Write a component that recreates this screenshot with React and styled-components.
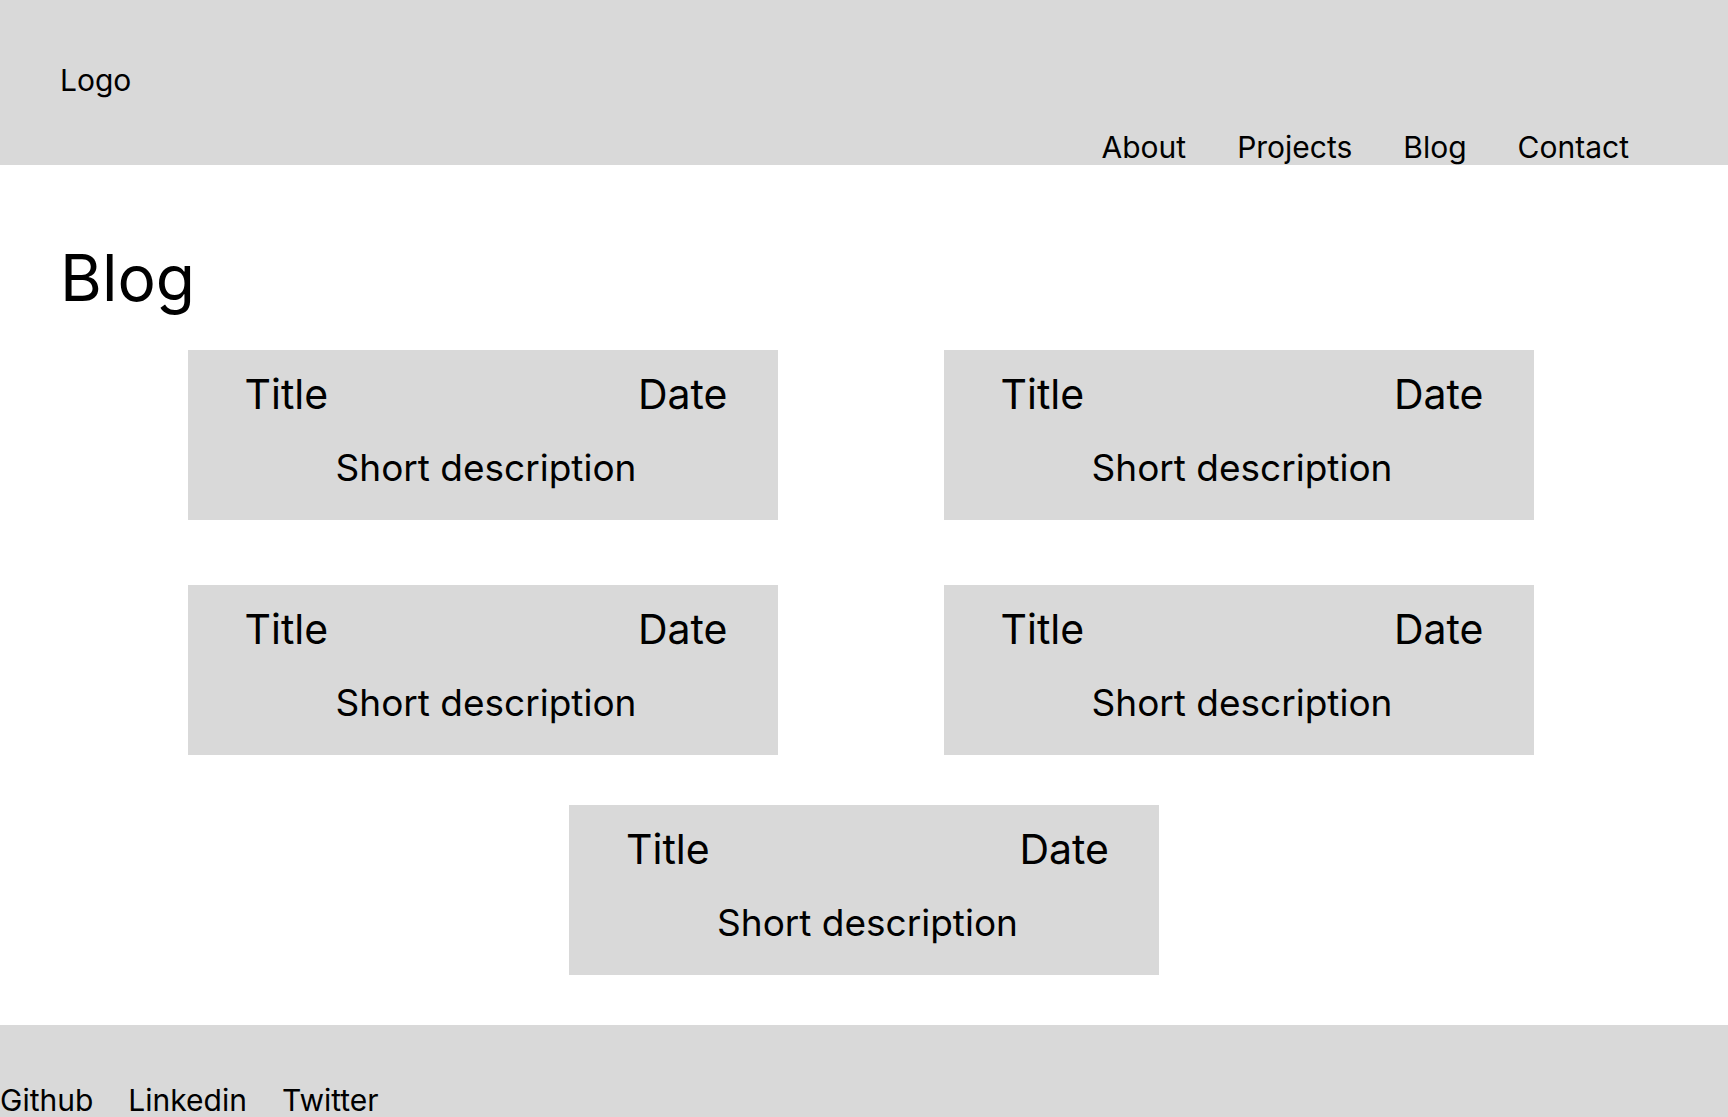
import React from "react";
import styled, { createGlobalStyle } from "styled-components";

const Global = createGlobalStyle`
  html, body { margin: 0; padding: 0; background: #ffffff; }
  body { font-family: Inter, "Noto Sans", sans-serif; color: #000000; }
  * { box-sizing: border-box; }
`;

const Header = styled.header`
  height: 165px;
  background: #d9d9d9;
  padding: 62px 99px 0 60px;
  display: flex;
  flex-direction: column;
`;

const Logo = styled.div`
  font-size: 30px;
  line-height: normal;
`;

const Nav = styled.nav`
  margin-top: auto;
  align-self: flex-end;
  display: flex;
  gap: 51px;
`;

const NavLink = styled.a`
  font-size: 30px;
  line-height: normal;
  color: #000;
  text-decoration: none;
`;

const Main = styled.main`
  padding: 0 0 50px;
`;

const Heading = styled.h1`
  margin: 74px 0 34px 60px;
  font-size: 64px;
  font-weight: 400;
  line-height: normal;
`;

const Grid = styled.div`
  display: grid;
  grid-template-columns: repeat(2, 590px);
  column-gap: 166px;
  row-gap: 65px;
  justify-content: center;
  padding-right: 7px;
`;

const Single = styled.div`
  display: flex;
  justify-content: center;
  margin-top: 50px;
`;

const Card = styled.article`
  width: 590px;
  height: 170px;
  background: #d9d9d9;
  padding: 19px 50px 0 57px;
`;

const CardHead = styled.div`
  display: flex;
  justify-content: space-between;
  font-size: 41px;
  line-height: normal;
`;

const Desc = styled.p`
  margin: 26px 0 0;
  font-size: 37px;
  line-height: normal;
  text-align: center;
`;

const Footer = styled.footer`
  background: #d9d9d9;
  padding: 57px 0 0;
  display: flex;
  gap: 35px;
`;

const FootLink = styled.a`
  font-size: 30px;
  line-height: normal;
  color: #000;
  text-decoration: none;
`;

const PostCard = () => (
  <Card>
    <CardHead>
      <span>Title</span>
      <span>Date</span>
    </CardHead>
    <Desc>Short description</Desc>
  </Card>
);

export default function App() {
  return (
    <>
      <Global />
      <Header>
        <Logo>Logo</Logo>
        <Nav>
          <NavLink>About</NavLink>
          <NavLink>Projects</NavLink>
          <NavLink>Blog</NavLink>
          <NavLink>Contact</NavLink>
        </Nav>
      </Header>
      <Main>
        <Heading>Blog</Heading>
        <Grid>
          <PostCard />
          <PostCard />
          <PostCard />
          <PostCard />
        </Grid>
        <Single>
          <PostCard />
        </Single>
      </Main>
      <Footer>
        <FootLink>Github</FootLink>
        <FootLink>Linkedin</FootLink>
        <FootLink>Twitter</FootLink>
      </Footer>
    </>
  );
}
